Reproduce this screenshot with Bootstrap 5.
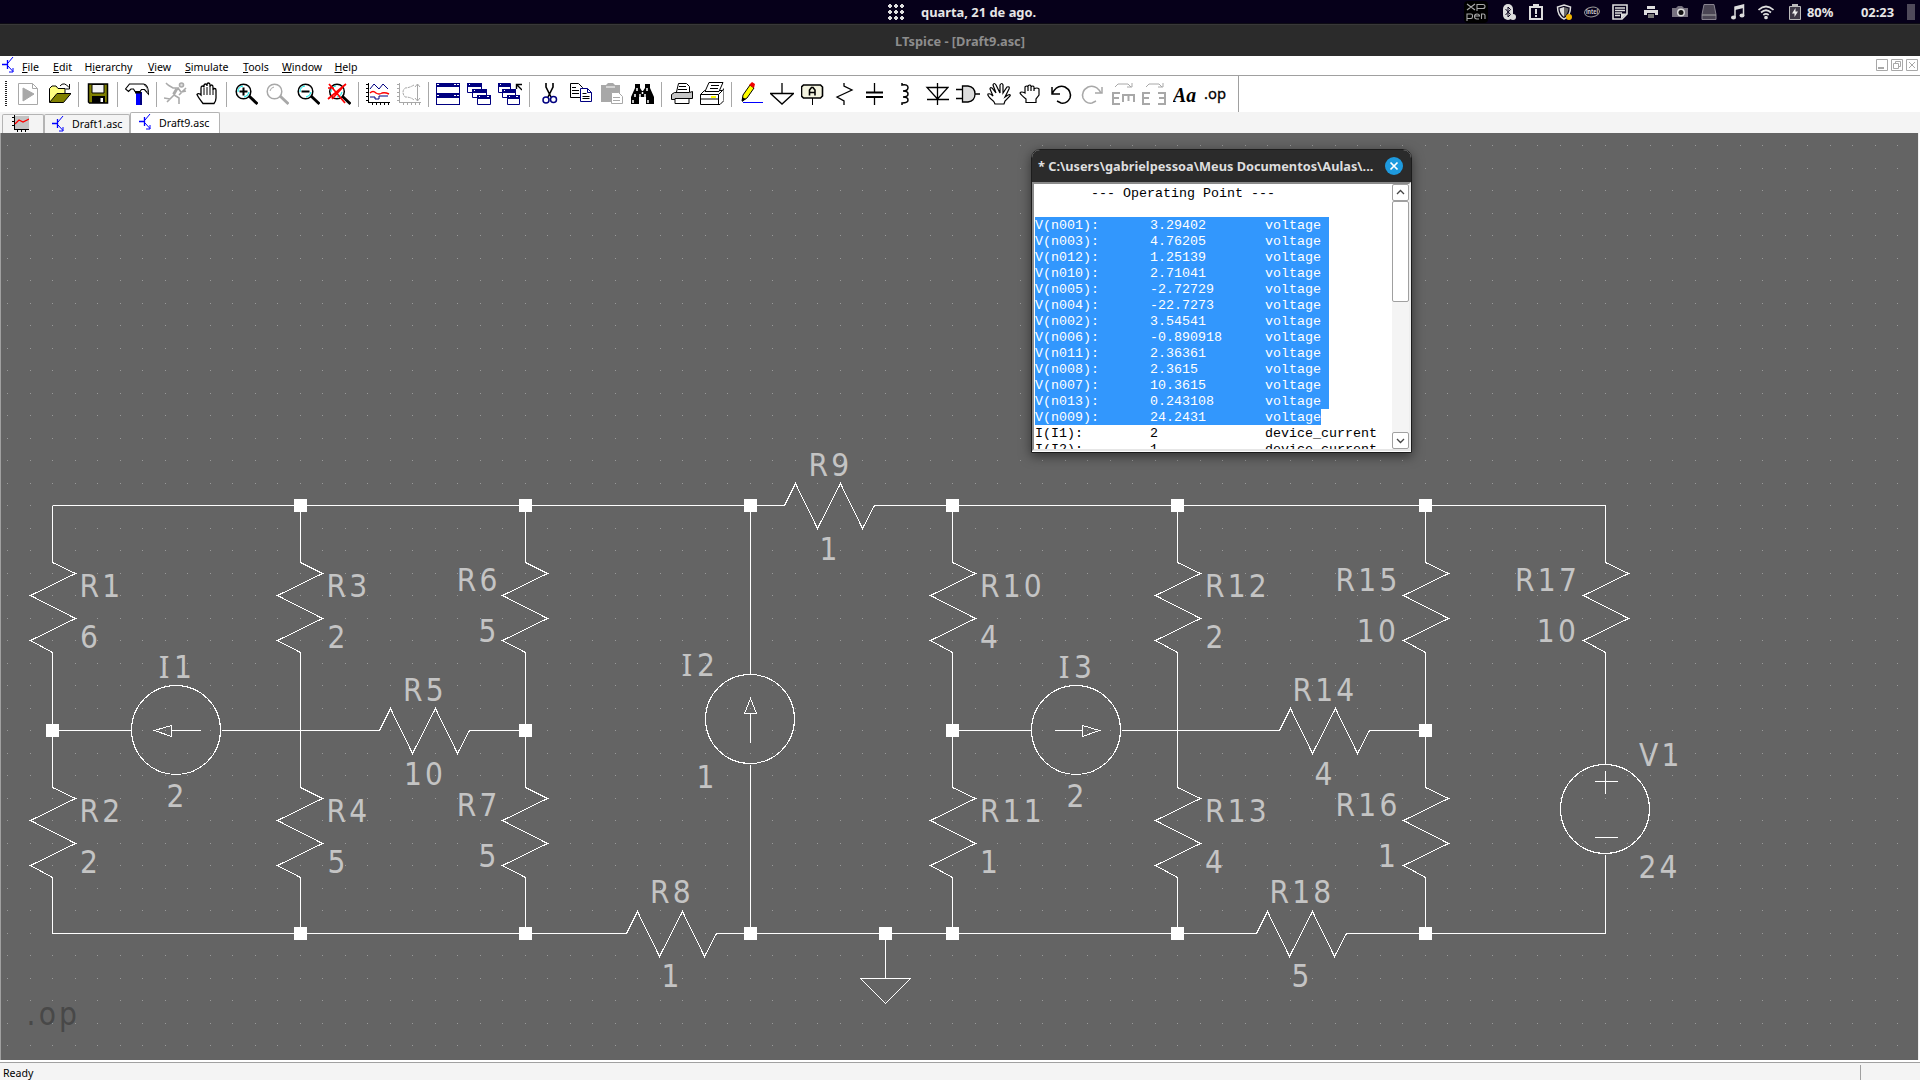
<!DOCTYPE html>
<html lang="pt-BR">
<head>
<meta charset="utf-8">
<title>LTspice - [Draft9.asc]</title>
<link href="https://cdn.jsdelivr.net/npm/bootstrap@5.3.0/dist/css/bootstrap.min.css" rel="stylesheet">
<style>
  body { width: 1920px; height: 1080px; overflow: hidden; background: #f4f4f4; font-family: "Noto Sans", sans-serif; font-size: 10.6px; line-height: 1; color: #000; }
  svg { display: block; flex: none; }
  .desk-bar { height: 24px; background: #06001a; border-bottom: 1px solid #0d0b14; color: #e6e6e6; font: 700 12.9px/24px "Noto Sans", sans-serif; }
  .desk-date { padding-left: 888px; width: 1464px; }
  .desk-tray svg { margin-right: 12px; }
  .desk-tray svg.tray-wide { margin-right: 15px; }
  .desk-tray svg.tray-b { margin-right: 13px; }
  .app-title { height: 32px; background: #2b2b2b; border-top: 1px solid #383838; color: #8d8d8d; font: 700 12.8px/32px "Noto Sans", sans-serif; text-align: center; }
  .menu-strip { height: 20px; background: #fff; border-bottom: 1px solid #a0a0a0; padding-left: 2px; }
  .menu-strip span { display: block; padding-top: 6px; height: 19px; }
  .menu-strip u { text-underline-offset: 1px; }
  .mdi svg { margin-right: 3px; }
  .tool-strip { height: 36px; background: #fff; padding-left: 5px; }
  .tool-grip { width: 2px; height: 26px; margin-right: 9px; background: repeating-linear-gradient(#222 0 1px, #fff 1px 2px); }
  .tool-strip > svg { margin-right: 7px; }
  .tool-sep { width: 1px; height: 25px; background: #a8a8a8; margin-right: 7px; }
  .tool-end { width: 1px; height: 36px; background: #a0a0a0; margin-left: 3px; }
  .tab-strip { height: 21px; padding-left: 2px; background: #f4f4f4; }
  .doc-tab { height: 19px; border: 1px solid #b4b4b4; border-bottom: 0; border-radius: 2px 2px 0 0; background: #f4f4f4; }
  .doc-tab.current { height: 21px; background: #fff; }
  .sheet { height: 927px; background: #646464; position: relative; }
  .sheet text { font-family: "DejaVu Sans Condensed", "DejaVu Sans", sans-serif; font-stretch: condensed; font-size: 31.3px; fill: #c4c4c4; letter-spacing: 3.2px; }
  .sheet .lbl-i { font-family: "Noto Sans", sans-serif; font-stretch: normal; font-size: 31.8px; letter-spacing: 4.5px; }
  .sheet .lbl-end { text-anchor: end; }
  .sheet .lbl-mid { text-anchor: middle; }
  .wire { fill: none; stroke: #fff; stroke-width: 1; shape-rendering: crispEdges; }
  .status-strip { height: 20px; border-top: 2px solid #fff; position: relative; }
  .status-body { border-top: 1px solid #a0a0a0; height: 18px; padding: 5px 0 0 3px; background: #f4f4f4; }
  .status-body i { width: 1px; height: 15px; margin: -3px 59px 0 0; background: #a0a0a0; }
  .log-window { position: absolute; left: 1031px; top: 16px; width: 381px; height: 304px; background: #fff; border: 1px solid #1c1c1c; border-radius: 9px 9px 0 0; box-shadow: 0 3px 12px rgba(0,0,0,.5); overflow: hidden; }
  .log-title { height: 32px; background: #2b2b2b; color: #dedede; font: 700 12.75px/33px "Noto Sans", sans-serif; padding: 0 8px 0 6px; white-space: nowrap; }
  .log-body { height: 269px; border-left: 2px solid #8a8a8a; border-top: 2px solid #8a8a8a; border-right: 2px solid #eee; border-bottom: 2px solid #e6e6e6; overflow: hidden; }
  .log-text { width: 358px; height: 265px; overflow: hidden; padding: 1px 0 0 1px; font: 13.33px/16px "Liberation Mono", monospace; white-space: pre; }
  .log-row { height: 16px; width: max-content; padding-top: 1px; }
  .log-row span { width: 115px; }
  .log-row span:last-child { width: auto; }
  .log-row.picked { background: #3297fd; color: #fff; width: 294px; }
  .log-row.picked.final-row { width: 286px; }
  .log-scroll { width: 17px; background: #f4f4f4; }
  .log-scroll div { border: 1px solid #a0a0a0; border-radius: 2px; background: #fff; }
  .scroll-end { height: 17px; }
  .scroll-thumb { height: 101px; }
</style>
<script src="https://cdn.jsdelivr.net/npm/bootstrap@5.3.0/dist/js/bootstrap.bundle.min.js"></script>
</head>
<body>
<!-- desktop panel -->
<div class="desk-bar d-flex align-items-center">
  <div class="desk-date d-flex align-items-center flex-shrink-0">
    <svg width="16" height="16" viewBox="0 0 16 16" fill="#ddd"><path d="M1 0h2v1h1v2H3v1H1V3H0V1h1zM7 0h2v1h1v2H9v1H7V3H6V1h1zM13 0h2v1h1v2h-1v1h-2V3h-1V1h1zM1 6h2v1h1v2H3v1H1V9H0V7h1zM7 6h2v1h1v2H9v1H7V9H6V7h1zM13 6h2v1h1v2h-1v1h-2V9h-1V7h1zM1 12h2v1h1v2H3v1H1v-1H0v-2h1zM7 12h2v1h1v2H9v1H7v-1H6v-2h1zM13 12h2v1h1v2h-1v1h-2v-1h-1v-2h1z"/></svg>
    <span style="padding-left:17px">quarta, 21 de ago.</span>
  </div>
  <div class="desk-tray d-flex align-items-center">
    <svg width="24" height="22" viewBox="0 0 24 22"><rect width="24" height="22" rx="4" fill="#000"/><path d="M3 3l8 6M11 3L3 9M13 10V3.500h6q2 0 2 2t-2 2h-6M3 20v-7h4q1.500 0 1.500 1.500v1q0 2-1.500 2H3M10.500 15h5q0-2-2.500-2t-2.500 2.500 2.500 2.500h2M17.500 18v-5h2q1.500 0 1.500 1.500V18" fill="none" stroke="#aaa" stroke-width="1.100"/></svg>
    <svg width="16" height="16" viewBox="0 0 16 16"><rect x="3" width="10" height="16" rx="5" fill="#ddd"/><path d="M5.500 5l5 5.500L8 13V3l2.500 2.500L5.500 11" fill="none" stroke="#06001a"/><circle cx="13" cy="13" r="3" fill="#ddd"/></svg>
    <svg width="16" height="16" viewBox="0 0 16 16"><path d="M2 3h12v12H2zM6 3V1h4v2" fill="none" stroke="#ddd" stroke-width="2"/><path d="M7 5h2v5H7zM7 11h2v2H7z" fill="#ddd"/></svg>
    <svg width="16" height="16" viewBox="0 0 16 16"><path d="M8 1l6.500 2q0 9-6.500 12Q1.500 12 1.500 3z" fill="none" stroke="#ddd" stroke-width="1.500"/><path d="M8 3L3.500 4.500Q4 10 8 13z" fill="#ddd"/><path d="M8 3l4.500 1.500Q12 10 8 13z" fill="#666"/><circle cx="13" cy="13" r="3" fill="#f0b400"/></svg>
    <svg width="16" height="16" viewBox="0 0 16 16"><ellipse cx="8" cy="8" rx="7.500" ry="4.800" fill="none" stroke="#999" transform="rotate(-8 8 8)"/><text x="2" y="10.300" font-size="6.500" font-weight="700" fill="#ccc" textLength="12" lengthAdjust="spacingAndGlyphs">intel</text></svg>
    <svg class="tray-wide" width="16" height="16" viewBox="0 0 16 16"><path d="M1 1h14v9l-5 5H1z" fill="none" stroke="#ddd" stroke-width="1.600"/><path d="M3 4h10M3 6.500h10M3 9h7M3 11.500h5" stroke="#ddd" stroke-width="1.300"/><path d="M9 15V9.500h6z" fill="#ddd"/></svg>
    <svg class="tray-b" width="16" height="16" viewBox="0 0 16 16"><path d="M4 2h8v3H4zM1 6h14v5h-3V9H4v2H1z" fill="#ddd"/><path d="M5 10h6v4H5z" fill="#777"/></svg>
    <svg class="tray-b" width="16" height="16" viewBox="0 0 16 16"><path d="M0 4h4l2-2h4l2 2h4v9H0z" fill="#77727f"/><circle cx="9" cy="8.500" r="4" fill="#ddd"/><circle cx="9" cy="8.500" r="2.500" fill="#111"/></svg>
    <svg class="tray-b" width="16" height="16" viewBox="0 0 16 16"><path d="M3 .5h10l2 10v5H1v-5z" fill="#4b4654" stroke="#88838f"/><path d="M1 11h14" stroke="#aaa"/></svg>
    <svg width="16" height="16" viewBox="0 0 16 16"><path d="M5 13V3l8.500-2v10" fill="none" stroke="#ddd" stroke-width="1.500"/><path d="M5 3l8.500-2v3L5 6z" fill="#ddd"/><ellipse cx="3.500" cy="13.500" rx="2.500" ry="2" fill="#ddd"/><ellipse cx="12" cy="11.500" rx="2.500" ry="2" fill="#ddd"/></svg>
    <svg class="tray-b" width="16" height="16" viewBox="0 0 16 16" fill="none" stroke="#ddd" stroke-width="1.700"><path d="M.5 6Q8-1 15.500 6M3 8.500q5-4.500 10 0M5.300 11q2.700-2.400 5.400 0"/><circle cx="8" cy="13.500" r="1" fill="#ddd"/></svg>
    <svg width="16" height="16" viewBox="0 0 16 16" style="margin-right:4px"><path d="M2.500 2.500h11v13h-11z" fill="#3e3947" stroke="#bbb"/><path d="M5 0h6v2H5z" fill="#bbb"/><path d="M8.500 4L5 9.500h2.500V13L11 7.500H8.500z" fill="#eee"/></svg>
  </div>
  <span style="width:54px">80%</span><span style="width:46px">02:23</span>
  <span style="width:8px;height:16px;background:#4f4a5a"></span>
</div>
<div class="app-title">LTspice - [Draft9.asc]</div>

<!-- menu -->
<div class="menu-strip d-flex">
  <svg width="20" height="17" viewBox="0 -1 20 17"><use href="#bjt"/></svg>
  <span style="width:31px"><u>F</u>ile</span><span style="width:31.500px"><u>E</u>dit</span><span style="width:63.500px">H<u>i</u>erarchy</span><span style="width:37px"><u>V</u>iew</span><span style="width:58px"><u>S</u>imulate</span><span style="width:39px"><u>T</u>ools</span><span style="width:52.500px"><u>W</u>indow</span><span><u>H</u>elp</span>
  <div class="mdi d-flex ms-auto" style="padding:3px 0 0;margin-right:-1px">
    <svg width="12" height="12" viewBox="0 0 12 12" fill="none" stroke="#a8a8a8"><path d="M.5.5h11v11H.5z"/><path d="M2 9h6" stroke-width="2"/></svg>
    <svg width="12" height="12" viewBox="0 0 12 12" fill="none" stroke="#a8a8a8"><path d="M.5.5h11v11H.5zM2.500 4.500h5v5h-5zM4.500 4V2.500h5v5H8"/></svg>
    <svg width="12" height="12" viewBox="0 0 12 12" fill="none" stroke="#a8a8a8"><path d="M.5.5h11v11H.5zM3 3l6 6M9 3L3 9"/></svg>
  </div>
</div>

<!-- toolbar -->
<div class="tool-strip d-flex align-items-center">
  <div class="tool-grip"></div>
  <svg width="24" height="24" viewBox="0 0 24 24" fill="none" stroke="#a8a8a8"><path d="M2.500 1.500h14l5 5v16h-19zM16.500 1.500v5h5"/><path d="M7 6l11 6-11 7z" fill="#a8a8a8"/></svg>
  <svg width="24" height="24" viewBox="0 0 24 24" stroke="#000"><path d="M2.500 20V6.500L5 4h4l2 2.500h7V12" fill="#ffff80"/><path d="M2.500 20.500L10 11.500h14L16.500 20.500z" fill="#808000"/><path d="M13 4q4-5 9 1.500M22.500 2v5h-4" fill="none"/></svg>
  <i class="tool-sep"></i>
  <svg width="24" height="24" viewBox="0 0 24 24"><path d="M2.500 2h19v19h-18l-1-1z" fill="#808000" stroke="#000" stroke-width="1.500"/><path d="M6 2.500h12V11H6z" fill="#f4f4f4" stroke="#000"/><path d="M6 14h13v7H6z" fill="#000"/><path d="M14.500 16H17v4h-2.500z" fill="#fff"/></svg>
  <i class="tool-sep"></i>
  <svg width="24" height="24" viewBox="0 0 24 24"><path d="M11 10h4v13h-4z" fill="#00f"/><path d="M15 10h2v13h-2z" fill="#000080"/><path d="M.5 7l4-5h14q5 1 5 10l-4-4.500h-3L15 9.500h-5L8.500 7H6L3.500 9.500z" fill="#fff" stroke="#000" stroke-width="1.200"/><path d="M19 3q4 2 4 8" fill="none" stroke="#888"/><path d="M10 10.500h6" stroke="#000" stroke-width="2"/></svg>
  <i class="tool-sep"></i>
  <svg width="24" height="24" viewBox="0 0 24 24" stroke="#aaa" stroke-width="1.600" fill="none"><circle cx="17.500" cy="3" r="2" fill="#ddd"/><path d="M4 3l5 3 5 0-4 7 5 3v6M10 13l-4 4-6-1M14 6l3 4 5-1M12 7l-3 5M4 3L2 1M15 13l7-7M9 14l-6 6"/></svg>
  <svg width="24" height="24" viewBox="0 0 24 24"><path d="M8 21.500Q3 15 2 12.500q1.500-2 4 .5V6q0-2 1.500-2T9 5.500V4q0-2 1.500-2T12 4V3q0-2 1.500-2T15 3v2q0-2 1.500-2T18 5v3q0-1.500 1.500-1.500T21 8v8q0 3-2 5.500z" fill="#fff" stroke="#000" stroke-width="1.300"/><path d="M9 6v7M12 5v8M15 5v8M18 8v5" stroke="#000"/></svg>
  <i class="tool-sep"></i>
  <svg width="24" height="24" viewBox="0 0 24 24" fill="none"><path d="M15 14l8.500 8" stroke="#000" stroke-width="3"/><circle cx="9.500" cy="9.500" r="7.300" fill="#fff" stroke="#000" stroke-width="1.500"/><path d="M4 10a6 6 0 0 1 5-6M15 10a6 6 0 0 1-5 5" stroke="#0ee"/><path d="M5.500 9.500h8M9.500 5.500v8" stroke="#000" stroke-width="2"/></svg>
  <svg width="24" height="24" viewBox="0 0 24 24" fill="none" stroke="#a8a8a8"><path d="M15 14l8.500 8" stroke-width="3"/><circle cx="9.500" cy="9.500" r="7.300" stroke-width="1.500"/><path d="M5 9a5 5 0 0 1 4-4"/></svg>
  <svg width="24" height="24" viewBox="0 0 24 24" fill="none"><path d="M15 14l8.500 8" stroke="#000" stroke-width="3"/><circle cx="9.500" cy="9.500" r="7.300" fill="#fff" stroke="#000" stroke-width="1.500"/><path d="M4 10a6 6 0 0 1 5-6M15 10a6 6 0 0 1-5 5" stroke="#0ee"/><path d="M5.500 9.500h8" stroke="#000" stroke-width="2"/></svg>
  <svg width="24" height="24" viewBox="0 0 24 24" fill="none"><path d="M15 14l8.500 8" stroke="#000" stroke-width="3"/><circle cx="10" cy="9.500" r="7.300" fill="#fff" stroke="#000" stroke-width="1.500"/><path d="M4 10a6 6 0 0 1 5-6M15 10a6 6 0 0 1-5 5" stroke="#0ee"/><path d="M2 2l16 19M19 2L1 17M1 6h6M5 17L16 5" stroke="#f00" stroke-width="1.700"/></svg>
  <i class="tool-sep"></i>
  <svg width="24" height="24" viewBox="0 0 24 24" fill="none"><path d="M2.500 1v20M2 20.500h22M0 2.500h3M0 6.500h3M0 10.500h3M0 14.500h3M0 18.500h3M6.500 20v3M10.500 20v3M14.500 20v3M18.500 20v3M22.500 20v3" stroke="#000" shape-rendering="crispEdges"/><path d="M4 7l4-5 5 5 4-5 5 5M4 15h5v2h4v-3h9" stroke="#000080"/><path d="M4 11q3-3 6 0 3 2 6 0 3-1 7 1" stroke="#f00" stroke-width="1.500"/></svg>
  <svg width="24" height="24" viewBox="0 0 24 24" fill="none" stroke="#a8a8a8"><path d="M2.500 1v20M2 20.500h22M0 2.500h3M0 6.500h3M0 10.500h3M0 14.500h3M0 18.500h3M6.500 20v3M10.500 20v3M14.500 20v3M18.500 20v3M22.500 20v3M20.500 2v17M18 5l2.500-3L23 5M18 16l2.500 3 2.500-3"/><path d="M17 3q-5 3-9 3Q4 10 8 15q6 0 9 3" stroke-dasharray="3 .7"/></svg>
  <i class="tool-sep"></i>
  <svg width="24" height="24" viewBox="0 0 24 24"><path d="M0 1h24v22H0z" fill="#000080"/><path d="M1 5h22v6H1zM1 16h22v6H1zM1 2h2v1H1zM18 2h2v1h-2zM21 2h2v1h-2zM1 13h2v1H1zM18 13h2v1h-2zM21 13h2v1h-2z" fill="#fff"/></svg>
  <svg width="24" height="24" viewBox="0 0 24 24" fill="#fff" stroke="#000080"><path d="M.5 1.500h14v9H.5z"/><path d="M0 3h15" stroke-width="4"/><path d="M5.500 7.500h14v8h-14z"/><path d="M5 9h15" stroke-width="4"/><path d="M10.500 13.500h13v9h-13z"/><path d="M10 15h14" stroke-width="4"/><path d="M2 2.500h1M7 8.500h1M12 14.500h1M20 14.500h2" stroke="#fff"/></svg>
  <svg width="24" height="24" viewBox="0 0 24 24" fill="#fff" stroke="#000080"><path d="M.5 1.500h12v9H.5z"/><path d="M0 3h12" stroke-width="4"/><path d="M4.500 7.500h13v8h-13z"/><path d="M4 9h14" stroke-width="4"/><path d="M9.500 13.500h12v9h-12z"/><path d="M9 15h13" stroke-width="4"/><path d="M2 2.500h1M6 8.500h1M11 14.500h1M18 14.500h2" stroke="#fff"/><path d="M24 8l-5-5M18.500 7V2.500H24" fill="none" stroke="#000" stroke-width="1.400"/></svg>
  <i class="tool-sep"></i>
  <svg width="24" height="24" viewBox="0 0 24 24" fill="none"><path d="M9 1v4l5 10M16 1v4l-5 10" stroke="#000" stroke-width="1.600"/><circle cx="9" cy="18" r="3" stroke="#000080" stroke-width="1.500"/><circle cx="16.500" cy="17.500" r="3" stroke="#000080" stroke-width="1.500"/></svg>
  <svg width="24" height="24" viewBox="0 0 24 24" fill="#fff"><path d="M2.500 1.500h8l4 4v10h-12z" stroke="#000"/><path d="M4 5.500h4M4 8.500h7M4 11.500h7" stroke="#000"/><path d="M12.500 6.500h7l4 4v9h-11z" stroke="#000080"/><path d="M19.500 6.500v4h4" fill="none" stroke="#000080"/><path d="M14.500 11.500h4M14.500 14.500h7M14.500 16.500h7" stroke="#000"/></svg>
  <svg width="24" height="24" viewBox="0 0 24 24"><path d="M2 3h5l2-2h5l2 2h5v17H2z" fill="#a8a8a8"/><path d="M7 5h9" stroke="#fff"/><path d="M12.500 10.500h7l4 4v7h-11z" fill="#fff" stroke="#a8a8a8"/><path d="M14 15.500h7M14 18.500h7" stroke="#a8a8a8"/></svg>
  <svg width="24" height="24" viewBox="0 0 24 24"><path d="M5 2h5v4l2 3h1l2-3V2h5v4l4 9v7h-8v-7h-7v7H1v-7l4-9z" fill="#000"/><path d="M7 6v3M17 6v3M5 12v3M10 12v3M15 12v3M3 18v3M18 18v3M12.500 10v2" stroke="#fff" stroke-width="1.500"/></svg>
  <i class="tool-sep"></i>
  <svg width="24" height="24" viewBox="0 0 24 24" fill="#fff" stroke="#000"><path d="M7.500 10L9.500 1.500h8l3 3V10"/><path d="M5.500 10.500h15l3-1v7h-4v5h-13v-4h-4v-5z" fill="#c4c4c4"/><path d="M6 16.500h14v5H6z"/><path d="M10 4.500h7M9 7.500h9"/></svg>
  <svg width="24" height="24" viewBox="0 0 24 24" fill="#fff" stroke="#000"><path d="M.5 12.500l4-4h18l1.500-2v12l-4 4H.5zM.5 12.500h18l4-4M18.500 12.500v10M.5 17h18"/><path d="M5 9.500l4-9h14l-4 9zM11 3.500h8M10 6.500h8"/><path d="M11 15h5" stroke="#ff0" stroke-width="2"/></svg>
  <i class="tool-sep"></i>
  <svg width="24" height="24" viewBox="0 0 24 24"><path d="M3 19l1-6 7-10 4 3-7 10z" fill="#ff0" stroke="#000"/><path d="M10 3l3-3 3 2-1 4z" fill="#e00"/><path d="M3 20v-5l4 2z"/><path d="M4 20.500h20" stroke="#00f"/></svg>
  <svg width="24" height="24" viewBox="0 0 24 24" fill="none" stroke="#000" stroke-width="1.300"><path d="M12 1v10M.5 11.500h23L12 22z"/></svg>
  <svg width="24" height="24" viewBox="0 0 24 24" fill="#f4f4e0" stroke="#000"><path d="M11.500 16v7"/><path d="M2.500 3h17l2 2v9l-2 2h-17l-2-2V5z" stroke-width="1.600"/><path d="M8.500 13.500V8l2-2.500h1.500l2 2.500v5.500M8.500 10.500H14" fill="none" stroke-width="1.600"/></svg>
  <svg width="24" height="24" viewBox="0 0 24 24" fill="none" stroke="#000" stroke-width="1.300"><path d="M12 1v3l8 4-15 7 7 4v4"/></svg>
  <svg width="24" height="24" viewBox="0 0 24 24" fill="none" stroke="#000"><path d="M11.500 1v9M11.500 15v8" stroke-width="1.300"/><path d="M3 10.500h17M3 15h17" stroke-width="2"/></svg>
  <svg width="24" height="24" viewBox="0 0 24 24" fill="none" stroke="#000" stroke-width="1.500"><path d="M8 1v2q6-1 6 2.500T9 9q5 0 5 3t-5 3q5 0 5 3t-6 3v2"/></svg>
  <svg width="24" height="24" viewBox="0 0 24 24" fill="none" stroke="#000" stroke-width="1.300"><path d="M12.500 1v22M2 5.500h21L12.500 17zM2 17.500h22"/></svg>
  <svg width="24" height="24" viewBox="0 0 24 24" fill="#ddd" stroke="#000" stroke-width="1.300"><path d="M0 7.500h6M0 16.500h6M19 12h5M6.500 4H12q7 1 7 8t-7 8H6.500z"/></svg>
  <svg width="24" height="24" viewBox="0 0 24 24" fill="#fff" stroke="#000" stroke-width="1.200"><path d="M8 22q-1-3-4-5-4-4-3-5 2-1 5 2L3 7q0-2 2-1l4 5L6 3q1-3 3 0l4 8V3q2-3 3 0v8l4-6q3-1 2 2l-4 8 3-2q3-1 2 1l-5 5-1 3z"/></svg>
  <svg width="24" height="24" viewBox="0 0 24 24" fill="#fff" stroke="#000" stroke-width="1.200"><path d="M8 20.500v-3.500q-5-4-6-6 1-2 5 0V5q2-2 3 0V4q2-2 3 0v1q2-2 3 0v2q3-2 5 0v6l-3 4v3.500zM10 5v4M13 5v4M16 6v3"/></svg>
  <svg width="24" height="24" viewBox="0 0 24 24" fill="none" stroke="#000" stroke-width="1.500"><path d="M3 12Q8 2 16 5q7 4 5 11-3 6-9 5l-4-2M3 5v7h8"/></svg>
  <svg width="24" height="24" viewBox="0 0 24 24" fill="none" stroke="#a8a8a8" stroke-width="1.500"><path d="M21 11Q16 2 8 5q-7 4-5 11 3 6 9 5l4-2M22 5v6h-7"/></svg>
  <svg width="24" height="24" viewBox="0 0 24 24" fill="none" stroke="#a8a8a8" stroke-width="2"><path d="M9 11H2v11h7M2 16h6M12 20v-7h11v7M17.500 13v6"/><path d="M4 5l3-3h10l3 3M16 5h5V1" stroke-width="1"/></svg>
  <svg width="24" height="24" viewBox="0 0 24 24" fill="none" stroke="#a8a8a8" stroke-width="2"><path d="M8 11H1v11h7M1 16h6M16 11h7v11h-7M23 16h-6"/><path d="M4 5l3-3h10l3 3M16 5h5V1" stroke-width="1"/></svg>
  <svg width="24" height="24" viewBox="0 0 24 24"><text x="0" y="19.500" font-family="Liberation Serif, serif" font-size="20" font-weight="700" font-style="italic" textLength="23" lengthAdjust="spacingAndGlyphs">Aa</text></svg>
  <svg width="24" height="24" viewBox="0 0 24 24"><text x="0" y="17" font-family="Noto Sans, sans-serif" font-size="15" textLength="22" lengthAdjust="spacingAndGlyphs" stroke="#000" stroke-width=".3">.op</text></svg>
  <i class="tool-end"></i>
</div>

<!-- document tabs -->
<div class="tab-strip d-flex align-items-end">
  <div class="doc-tab" style="width:42px;padding-left:9px"><svg width="17" height="17" viewBox="0 0 17 17" fill="none"><path d="M3 1h14v13H3z" fill="#c4c4c4"/><path d="M2.500 0v15M2 14.500h15M0 2.500h2M0 6.500h2M0 10.500h2M5.500 15v2M9.500 15v2M13.500 15v2" stroke="#000"/><path d="M3 9l4-4 4 2 6-3" stroke="#f00" stroke-width="1.300"/></svg></div>
  <div class="doc-tab d-flex" style="width:86px;padding-left:7px"><svg width="20" height="17" viewBox="0 -1 20 17"><use href="#bjt"/></svg><span style="padding-top:4px">Draft1.asc</span></div>
  <div class="doc-tab current d-flex" style="width:90px;padding-left:8px"><svg width="20" height="17" viewBox="0 -1 20 17"><use href="#bjt"/></svg><span style="padding-top:5px">Draft9.asc</span></div>
</div>

<!-- schematic -->
<div class="sheet">
<svg width="1920" height="927" viewBox="0 133 1920 927">
  <defs>
    <g id="bjt" fill="none" stroke="#00f"><path d="M0 7.500h5M5.500 3v9" stroke-width="1.300"/><path d="M6 6l5-6M6 9l5 5.500M11 11v4H7" stroke-width="1"/></g>
    <pattern id="dots" x="0" y="133" width="45" height="45" patternUnits="userSpaceOnUse"><path d="M7 12h1v1H7zM30 12h1v1h-1zM7 35h1v1H7zM30 35h1v1h-1z" fill="#999" shape-rendering="crispEdges"/></pattern>
    <path id="rv" d="M0 0V57L23 68-22 90 23 113-22 135 0 147V225"/>
    <path id="rvs" d="M0 0V57L23 68-22 90 23 113-22 135 0 147V203"/>
    <path id="rw" d="M0 0V57L22 68-23 90 22 113-23 135 0 147V225"/>
    <path id="rws" d="M0 0V57L22 68-23 90 22 113-23 135 0 147V203"/>
    <path id="rh" d="M-11 0L0-22 22 23 45-22 67 23 79 0"/>
    <path id="nd" d="M-6 -6h13v13h-13z" fill="#fff" stroke="none"/>
  </defs>
  <rect y="133" width="1920" height="927" fill="url(#dots)"/>
  <path d="M.5 133v927" stroke="#a0a0a0"/><path d="M1918.500 133v927" stroke="#f0f0f0" stroke-width="1"/><path d="M1919.500 133v927" stroke="#fff"/>
  <g class="wire" transform="translate(.5 .5)">
    <path d="M52 505H784M874 505H1605M52 933H626M716 933H1256M1346 933H1605M52 730H131M221 730H379M469 730H525M952 730H1031M1121 730H1279M1369 730H1425M750 505V674M750 764V933M1605 730V764M1605 854V933M885 933V978M860 978H910L885 1003Z"/>
    <use href="#rv" x="52" y="505"/><use href="#rvs" x="52" y="730"/><use href="#rw" x="300" y="505"/><use href="#rws" x="300" y="730"/>
    <use href="#rw" x="525" y="505"/><use href="#rws" x="525" y="730"/><use href="#rv" x="952" y="505"/><use href="#rvs" x="952" y="730"/>
    <use href="#rv" x="1177" y="505"/><use href="#rvs" x="1177" y="730"/><use href="#rv" x="1425" y="505"/><use href="#rvs" x="1425" y="730"/><use href="#rv" x="1605" y="505"/>
    <use href="#rh" x="390" y="730"/><use href="#rh" x="795" y="505"/><use href="#rh" x="637" y="933"/><use href="#rh" x="1290" y="730"/><use href="#rh" x="1267" y="933"/>
    <circle cx="175.500" cy="729.500" r="44.500"/><circle cx="1075.500" cy="729.500" r="44.500"/><circle cx="749.500" cy="718.500" r="44.500"/><circle cx="1604.500" cy="808.500" r="44.500"/>
    <path d="M154 730L171 725V736ZM171 730H200M1099 730L1082 725V736ZM1082 730H1054M750 698L744 713H756ZM750 713V742M1594 781H1617M1605 770V793M1594 837H1617"/>
  </g>
  <g shape-rendering="crispEdges">
    <use href="#nd" x="300" y="505"/><use href="#nd" x="525" y="505"/><use href="#nd" x="750" y="505"/><use href="#nd" x="952" y="505"/><use href="#nd" x="1177" y="505"/><use href="#nd" x="1425" y="505"/>
    <use href="#nd" x="52" y="730"/><use href="#nd" x="525" y="730"/><use href="#nd" x="952" y="730"/><use href="#nd" x="1425" y="730"/>
    <use href="#nd" x="300" y="933"/><use href="#nd" x="525" y="933"/><use href="#nd" x="750" y="933"/><use href="#nd" x="885" y="933"/><use href="#nd" x="952" y="933"/><use href="#nd" x="1177" y="933"/><use href="#nd" x="1425" y="933"/>
  </g>
  <g>
    <text x="79.500" y="597">R1</text><text x="80" y="647.500">6</text><text x="79.500" y="822">R2</text><text x="80" y="873">2</text>
    <text x="326.500" y="597">R3</text><text x="327.500" y="647.500">2</text><text x="326.500" y="822">R4</text><text x="327.500" y="873">5</text>
    <text x="980" y="597">R10</text><text x="980" y="647.500">4</text><text x="980" y="822">R11</text><text x="980" y="873">1</text>
    <text x="1205" y="597">R12</text><text x="1205.500" y="647.500">2</text><text x="1205" y="822">R13</text><text x="1205" y="873">4</text>
    <text x="1639" y="766">V1</text><text x="1638.500" y="878">24</text>
    <text x="26.500" y="1024.500" style="fill:#484848">.op</text>
  </g>
  <g class="lbl-end">
    <text x="500.500" y="591">R6</text><text x="499.500" y="642">5</text><text x="500.500" y="816">R7</text><text x="499.500" y="867">5</text>
    <text x="1400.500" y="591">R15</text><text x="1399" y="642">10</text><text x="1400.500" y="816">R16</text><text x="1399" y="867">1</text>
    <text x="1580" y="591">R17</text><text x="1579" y="642">10</text>
    <text x="718" y="676"><tspan class="lbl-i">I</tspan>2</text><text x="717.500" y="788">1</text>
  </g>
  <g class="lbl-mid">
    <text x="425" y="700.500">R5</text><text x="425" y="784.500">10</text><text x="830.500" y="475.500">R9</text><text x="830" y="559.500">1</text>
    <text x="672" y="902.500">R8</text><text x="672" y="986.500">1</text><text x="1325" y="700.500">R14</text><text x="1325" y="784.500">4</text>
    <text x="1302" y="902.500">R18</text><text x="1302" y="986.500">5</text>
    <text x="177" y="678"><tspan class="lbl-i">I</tspan>1</text><text x="177" y="807">2</text><text x="1077" y="678"><tspan class="lbl-i">I</tspan>3</text><text x="1077" y="807">2</text>
  </g>
</svg>

<!-- floating result log -->
<div class="log-window">
  <div class="log-title d-flex align-items-center"><span class="me-auto">* C:\users\gabrielpessoa\Meus Documentos\Aulas\...</span>
    <svg width="18" height="18" viewBox="0 0 18 18"><circle cx="9" cy="9" r="9" fill="#1e9ade"/><path d="M5.500 5.500l7 7M12.500 5.500l-7 7" stroke="#fff" stroke-width="1.700"/></svg></div>
  <div class="log-body d-flex">
    <div class="log-text flex-shrink-0"><div class="log-row">       --- Operating Point ---</div><div class="log-row"></div><div class="log-row picked d-flex"><span>V(n001):</span><span>3.29402</span><span>voltage</span></div><div class="log-row picked d-flex"><span>V(n003):</span><span>4.76205</span><span>voltage</span></div><div class="log-row picked d-flex"><span>V(n012):</span><span>1.25139</span><span>voltage</span></div><div class="log-row picked d-flex"><span>V(n010):</span><span>2.71041</span><span>voltage</span></div><div class="log-row picked d-flex"><span>V(n005):</span><span>-2.72729</span><span>voltage</span></div><div class="log-row picked d-flex"><span>V(n004):</span><span>-22.7273</span><span>voltage</span></div><div class="log-row picked d-flex"><span>V(n002):</span><span>3.54541</span><span>voltage</span></div><div class="log-row picked d-flex"><span>V(n006):</span><span>-0.890918</span><span>voltage</span></div><div class="log-row picked d-flex"><span>V(n011):</span><span>2.36361</span><span>voltage</span></div><div class="log-row picked d-flex"><span>V(n008):</span><span>2.3615</span><span>voltage</span></div><div class="log-row picked d-flex"><span>V(n007):</span><span>10.3615</span><span>voltage</span></div><div class="log-row picked d-flex"><span>V(n013):</span><span>0.243108</span><span>voltage</span></div><div class="log-row picked final-row d-flex"><span>V(n009):</span><span>24.2431</span><span>voltage</span></div><div class="log-row d-flex"><span>I(I1):</span><span>2</span><span>device_current</span></div><div class="log-row d-flex"><span>I(I2):</span><span>1</span><span>device_current</span></div></div>
    <div class="log-scroll d-flex flex-column">
      <div class="scroll-end"><svg width="15" height="15" viewBox="0 0 15 15" fill="none" stroke="#444" stroke-width="1.300"><path d="M4 9l3.500-3.500L11 9"/></svg></div>
      <div class="scroll-thumb"></div>
      <div class="scroll-end mt-auto"><svg width="15" height="15" viewBox="0 0 15 15" fill="none" stroke="#444" stroke-width="1.300"><path d="M4 6l3.500 3.500L11 6"/></svg></div>
    </div>
  </div>
</div>
</div>

<div class="status-strip"><div class="status-body d-flex justify-content-between"><span>Ready</span><i></i></div></div>
</body>
</html>
